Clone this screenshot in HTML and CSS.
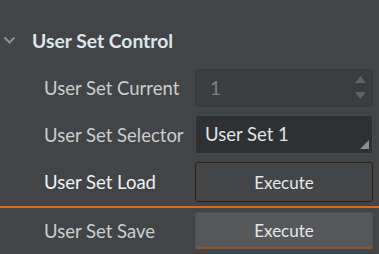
FILE: index.html
```html
<!DOCTYPE html>
<html lang="en">
<head>
  <meta charset="UTF-8">
  <meta name="viewport" content="width=device-width, initial-scale=1.0">
  <title>User Set Control</title>
  <link rel="stylesheet" href="styles.css">
</head>
<body>
  <div id="property-panel">
    <!-- last row of the previous category, scrolled mostly out of view -->
    <div class="clip-row"><span class="prop-label">Group Priority</span></div>

    <div class="category">
      <svg class="chevron" width="13" height="8" viewBox="0 0 13 8">
        <polyline points="1.5,1.5 6.5,6.5 11.5,1.5" />
      </svg>
      <span class="category-title">User Set Control</span>
    </div>

    <div class="prop-row">
      <span class="prop-label">User Set Current</span>
      <div class="spin-box">
        <span class="spin-value">1</span>
        <div class="spin-arrows">
          <svg width="11" height="7" viewBox="0 0 11 7"><polygon points="5.5,0 11,7 0,7" /></svg>
          <svg width="11" height="7" viewBox="0 0 11 7"><polygon points="0,0 11,0 5.5,7" /></svg>
        </div>
      </div>
    </div>

    <div class="prop-row">
      <span class="prop-label">User Set Selector</span>
      <div class="combo-box">
        <span>User Set 1</span>
        <svg class="combo-grip" width="9" height="9" viewBox="0 0 9 9"><polygon points="9,0 9,9 0,9" /></svg>
      </div>
    </div>

    <div class="prop-row is-active">
      <span class="prop-label">User Set Load</span>
      <button class="exec-btn">Execute</button>
    </div>

    <div class="prop-row short">
      <span class="prop-label">User Set Save</span>
      <button class="exec-btn raised">Execute</button>
    </div>
  </div>
</body>
</html>
```

FILE: styles.css
```css
body {
  margin: 0;
  background-color: #434445;
  font-family: Lato, "Open Sans", Arial, sans-serif;
  font-size: 18.5px;
  color: #c9ced3;
  overflow: hidden;
}

#property-panel {
  width: 379px;
}

/* partially scrolled row at the very top */
.clip-row {
  height: 5px;
  overflow: hidden;
  line-height: 20px;
}
.clip-row .prop-label {
  display: block;
  margin-top: -20px;
}

/* Category header */
.category {
  display: flex;
  align-items: center;
  box-sizing: border-box;
  height: 59px;
  padding: 11px 0 0 3px;
}
.chevron {
  fill: none;
  stroke: #909294;
  stroke-width: 2;
  margin-right: 16px;
}
.category-title {
  font-size: 19.3px;
  font-weight: bold;
  color: #dde5ed;
}

/* Property rows */
.prop-row {
  display: grid;
  grid-template-columns: 195px 178px;
  align-items: center;
  box-sizing: border-box;
  height: 47px;
}
.prop-label {
  padding-left: 44px;
  white-space: nowrap;
}
.prop-row.is-active {
  height: 50px;
  border-bottom: 2px solid #d9691c;
}
.prop-row.is-active .prop-label {
  color: #eef1f4;
}
.prop-row.short {
  height: 46px;
}

/* Disabled spin box */
.spin-box {
  display: flex;
  align-items: center;
  justify-content: space-between;
  box-sizing: border-box;
  height: 38px;
  padding: 0 6px 0 14px;
  background-color: #3c3d3e;
  border: 1px solid #38393a;
  border-radius: 3px;
}
.spin-value {
  color: #7e8082;
}
.spin-arrows {
  display: flex;
  flex-direction: column;
  gap: 9px;
}
.spin-arrows svg {
  display: block;
  fill: #606264;
}

/* Combo box */
.combo-box {
  position: relative;
  display: flex;
  align-items: center;
  box-sizing: border-box;
  height: 39px;
  padding: 0 10px 2px 9px;
  background-color: #2f3031;
  border: 1px solid #4a4b4d;
  border-radius: 3px;
  color: #dde4eb;
}
.combo-grip {
  position: absolute;
  right: 3px;
  bottom: 4px;
  fill: #8c8e90;
}

/* Command buttons */
.exec-btn {
  height: 40px;
  background-color: #444546;
  border: 1px solid #2a221d;
  border-radius: 3px;
  font-family: inherit;
  font-size: 17px;
  color: #e3e7eb;
}
.exec-btn.raised {
  height: 37px;
  margin-top: -1px;
  background-color: #57585a;
  border-color: #4f5052;
  border-bottom: 2px solid #8a5836;
}
```
